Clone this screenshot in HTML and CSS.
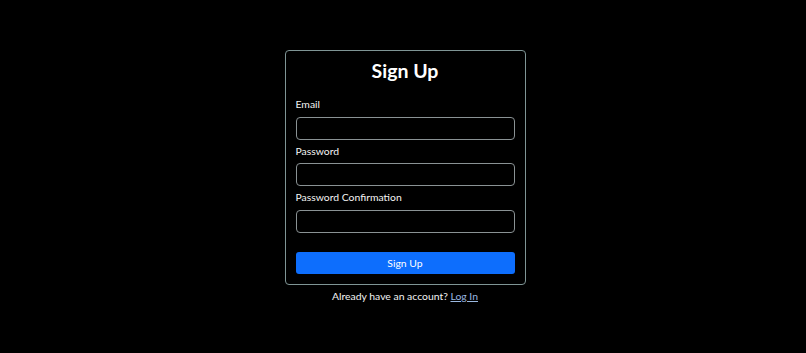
FILE: index.html
```html
<!DOCTYPE html>
<html lang="en">
<head>
  <meta charset="UTF-8" />
  <meta name="viewport" content="width=device-width, initial-scale=1.0"/>
  <title>Sign Up</title>
  <link rel="stylesheet" href="styles.css">
</head>
<body>
  <main class="page">
    <form class="card" onsubmit="return false">
      <h2 class="title">Sign Up</h2>
      <div class="field">
        <label for="email">Email</label>
        <input type="email" id="email" />
      </div>
      <div class="field">
        <label for="password">Password</label>
        <input type="password" id="password" />
      </div>
      <div class="field">
        <label for="password_confirmation">Password Confirmation</label>
        <input type="password" id="password_confirmation" />
      </div>
      <button type="submit" class="submit-btn">Sign Up</button>
    </form>
    <p class="footer">Already have an account? <a href="#">Log In</a></p>
  </main>
</body>
</html>
```

FILE: styles.css
```css
:root {
  --blue: #0d6efd;
  --text: #f4f4f4;
  --link: #9ab8e0;
  --card-border: #7f9595;
  --input-border: #8a9294;
  --black: #000;
}

body {
  margin: 0;
  font-family: Lato, 'Open Sans', sans-serif;
  background: var(--black);
  color: var(--text);
}

.page {
  display: flex;
  flex-direction: column;
  align-items: center;
  padding: 50px 0 0 4px;
}

.card {
  width: 219px;
  padding: 8px 10px 10px;
  border: 1px solid var(--card-border);
  border-radius: 4px;
  display: flex;
  flex-direction: column;
}

.title {
  margin: 0 0 14px;
  font-size: 19.5px;
  line-height: 24px;
  font-weight: 700;
  text-align: center;
  color: #fff;
}

.field {
  display: flex;
  flex-direction: column;
  margin-bottom: 4px;
}

.field label {
  font-size: 10.4px;
  line-height: 15px;
  margin-bottom: 4.5px;
}

.field input {
  height: 23px;
  box-sizing: border-box;
  background: var(--black);
  border: 1px solid var(--input-border);
  border-radius: 4px;
  color: var(--text);
  padding: 0 8px;
}

.submit-btn {
  margin-top: 15px;
  height: 22px;
  border: none;
  border-radius: 3px;
  background-color: var(--blue);
  color: #fff;
  font-family: inherit;
  font-size: 10.4px;
  cursor: pointer;
}

.footer {
  margin: 4px 0 0;
  font-size: 10.4px;
  line-height: 15px;
}

.footer a {
  color: var(--link);
}
```
